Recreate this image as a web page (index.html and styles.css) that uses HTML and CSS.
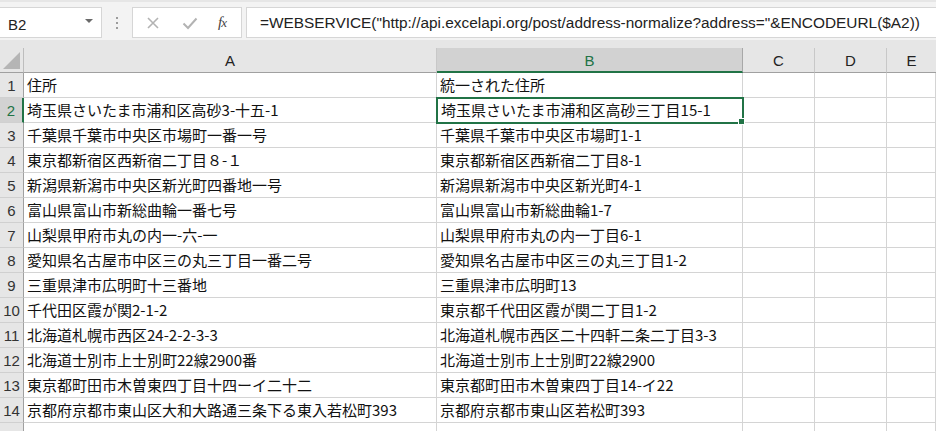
FILE: index.html
```html
<!DOCTYPE html>
<html lang="ja">
<head>
<meta charset="utf-8">
<title>Sheet</title>
<link rel="stylesheet" href="styles.css">
</head>
<body>
<div class="app">
  <div class="fbar">
    <div class="namebox">
      <span class="name">B2</span>
      <span class="caret"></span>
    </div>
    <div class="grip"><i></i><i></i><i></i></div>
    <div class="btns">
      <svg class="ico" width="14" height="14" viewBox="0 0 14 14"><path d="M2 2L12 12M12 2L2 12" stroke="#b3b3b3" stroke-width="1.6" fill="none"/></svg>
      <svg class="ico" width="16" height="14" viewBox="0 0 16 14"><path d="M1.5 7.5L6 12L14.5 2.5" stroke="#b3b3b3" stroke-width="2" fill="none"/></svg>
      <span class="fx">f<span class="x">x</span></span>
    </div>
    <div class="formula">=WEBSERVICE("http://api.excelapi.org/post/address-normalize?address="&amp;ENCODEURL($A2))</div>
  </div>
  <div class="gap"></div>
  <div class="sheet">
    <div class="ch corner"><span class="tri"></span></div>
    <div class="ch">A</div>
    <div class="ch sel">B</div>
    <div class="ch">C</div>
    <div class="ch">D</div>
    <div class="ch last">E</div>

    <div class="rh">1</div><div class="c">住所</div><div class="c">統一された住所</div><div class="c"></div><div class="c"></div><div class="c"></div>
    <div class="rh sel">2</div><div class="c">埼玉県さいたま市浦和区高砂3-十五-1</div><div class="c active">埼玉県さいたま市浦和区高砂三丁目15-1<span class="handle"></span></div><div class="c"></div><div class="c"></div><div class="c"></div>
    <div class="rh">3</div><div class="c">千葉県千葉市中央区市場町一番一号</div><div class="c">千葉県千葉市中央区市場町1-1</div><div class="c"></div><div class="c"></div><div class="c"></div>
    <div class="rh">4</div><div class="c">東京都新宿区西新宿二丁目８-１</div><div class="c">東京都新宿区西新宿二丁目8-1</div><div class="c"></div><div class="c"></div><div class="c"></div>
    <div class="rh">5</div><div class="c">新潟県新潟市中央区新光町四番地一号</div><div class="c">新潟県新潟市中央区新光町4-1</div><div class="c"></div><div class="c"></div><div class="c"></div>
    <div class="rh">6</div><div class="c">富山県富山市新総曲輪一番七号</div><div class="c">富山県富山市新総曲輪1-7</div><div class="c"></div><div class="c"></div><div class="c"></div>
    <div class="rh">7</div><div class="c">山梨県甲府市丸の内一-六-一</div><div class="c">山梨県甲府市丸の内一丁目6-1</div><div class="c"></div><div class="c"></div><div class="c"></div>
    <div class="rh">8</div><div class="c">愛知県名古屋市中区三の丸三丁目一番二号</div><div class="c">愛知県名古屋市中区三の丸三丁目1-2</div><div class="c"></div><div class="c"></div><div class="c"></div>
    <div class="rh">9</div><div class="c">三重県津市広明町十三番地</div><div class="c">三重県津市広明町13</div><div class="c"></div><div class="c"></div><div class="c"></div>
    <div class="rh">10</div><div class="c">千代田区霞が関2-1-2</div><div class="c">東京都千代田区霞が関二丁目1-2</div><div class="c"></div><div class="c"></div><div class="c"></div>
    <div class="rh">11</div><div class="c">北海道札幌市西区24-2-2-3-3</div><div class="c">北海道札幌市西区二十四軒二条二丁目3-3</div><div class="c"></div><div class="c"></div><div class="c"></div>
    <div class="rh">12</div><div class="c">北海道士別市上士別町22線2900番</div><div class="c">北海道士別市上士別町22線2900</div><div class="c"></div><div class="c"></div><div class="c"></div>
    <div class="rh">13</div><div class="c">東京都町田市木曽東四丁目十四ーイ二十二</div><div class="c">東京都町田市木曽東四丁目14-イ22</div><div class="c"></div><div class="c"></div><div class="c"></div>
    <div class="rh">14</div><div class="c">京都府京都市東山区大和大路通三条下る東入若松町393</div><div class="c">京都府京都市東山区若松町393</div><div class="c"></div><div class="c"></div><div class="c"></div>
    <div class="rh">15</div><div class="c"></div><div class="c"></div><div class="c"></div><div class="c"></div><div class="c"></div>
  </div>
</div>
</body>
</html>
```

FILE: styles.css
```css
html, body {
  margin: 0;
  padding: 0;
  background: #e6e6e6;
  overflow: hidden;
}
.app {
  width: 936px;
  height: 431px;
  overflow: hidden;
  font-family: "Noto Sans CJK JP", "Noto Sans", sans-serif;
}
.fbar {
  margin-top: 2px;
  height: 38px;
  background: #f3f3f3;
  display: flex;
  align-items: flex-start;
  padding-top: 5px;
  box-sizing: border-box;
}
.namebox {
  width: 102px;
  height: 31px;
  box-sizing: border-box;
  background: #fff;
  border: 1px solid #d6d6d6;
  border-left: none;
  display: flex;
  align-items: center;
  justify-content: space-between;
  padding: 0 8px 0 8px;
}
.name {
  font-family: "Liberation Sans", Arial, sans-serif;
  font-size: 15px;
  color: #222;
  padding-top: 3px;
}
.caret {
  width: 0;
  height: 0;
  border-left: 4px solid transparent;
  border-right: 4px solid transparent;
  border-top: 4px solid #6a6a6a;
  margin-top: -3px;
}
.grip {
  width: 30px;
  height: 31px;
  display: flex;
  flex-direction: column;
  align-items: center;
  justify-content: center;
  gap: 3px;
}
.grip i {
  display: block;
  width: 2px;
  height: 2px;
  background: #9c9c9c;
}
.btns {
  width: 110px;
  height: 31px;
  box-sizing: border-box;
  background: #fff;
  border: 1px solid #d6d6d6;
  display: flex;
  align-items: center;
  padding-left: 13px;
}
.ico { display: block; }
.btns .ico:nth-child(2) { margin-left: 22px; }
.fx {
  margin-left: 20px;
  font-family: "Liberation Serif", "Times New Roman", serif;
  font-style: italic;
  font-size: 15px;
  color: #444;
  letter-spacing: -1px;
}
.fx .x { font-size: 13px; }
.formula {
  margin-left: 4px;
  flex: 1;
  height: 31px;
  box-sizing: border-box;
  background: #fff;
  border: 1px solid #d6d6d6;
  border-right: none;
  padding: 4px 0 0 13px;
  font-family: "Liberation Sans", Arial, sans-serif;
  font-size: 15.4px;
  color: #222;
  white-space: nowrap;
  overflow: hidden;
  line-height: 22px;
}
.gap { height: 8px; }
.sheet {
  display: grid;
  grid-template-columns: 24px 413px 306px 72px 72px 1fr;
  grid-auto-rows: 25px;
}
.ch {
  background: #e6e6e6;
  border-right: 1px solid #c8c8c8;
  border-bottom: 1px solid #a0a0a0;
  box-sizing: border-box;
  text-align: center;
  font-family: "Liberation Sans", Arial, sans-serif;
  font-size: 15px;
  color: #222;
  line-height: 24px;
  padding-top: 1px;
}
.ch.last { border-right: none; }
.ch.sel {
  background: #d2d2d2;
  border-bottom: 2px solid #217346;
  color: #217346;
  border-right-color: #a8a8a8;
}
.corner {
  position: relative;
  border-right-color: #bdbdbd;
}
.tri {
  position: absolute;
  right: 3px;
  bottom: 3px;
  width: 0;
  height: 0;
  border-left: 17px solid transparent;
  border-bottom: 17px solid #b5b5b5;
}
.rh {
  background: #e6e6e6;
  border-right: 1px solid #a0a0a0;
  border-bottom: 1px solid #d0d0d0;
  box-sizing: border-box;
  text-align: center;
  font-family: "Liberation Sans", Arial, sans-serif;
  font-size: 15px;
  color: #333;
  line-height: 24px;
  padding-top: 1px;
}
.rh.sel {
  background: #d2d2d2;
  border-right: 2px solid #217346;
  color: #217346;
}
.c {
  background: #fff;
  border-right: 1px solid #d4d4d4;
  border-bottom: 1px solid #d4d4d4;
  box-sizing: border-box;
  padding-left: 3px;
  font-size: 15px;
  color: #111;
  line-height: 24px;
  white-space: nowrap;
  overflow: visible;
}
.c.active {
  position: relative;
  padding-left: 4px;
}
.c.active::after {
  content: "";
  position: absolute;
  left: -1px;
  top: -1px;
  right: -2px;
  bottom: -2px;
  border: 2px solid #217346;
  pointer-events: none;
}
.handle {
  position: absolute;
  right: -3px;
  bottom: -3px;
  width: 5px;
  height: 5px;
  background: #217346;
  border: 1px solid #fff;
  z-index: 2;
}
```
